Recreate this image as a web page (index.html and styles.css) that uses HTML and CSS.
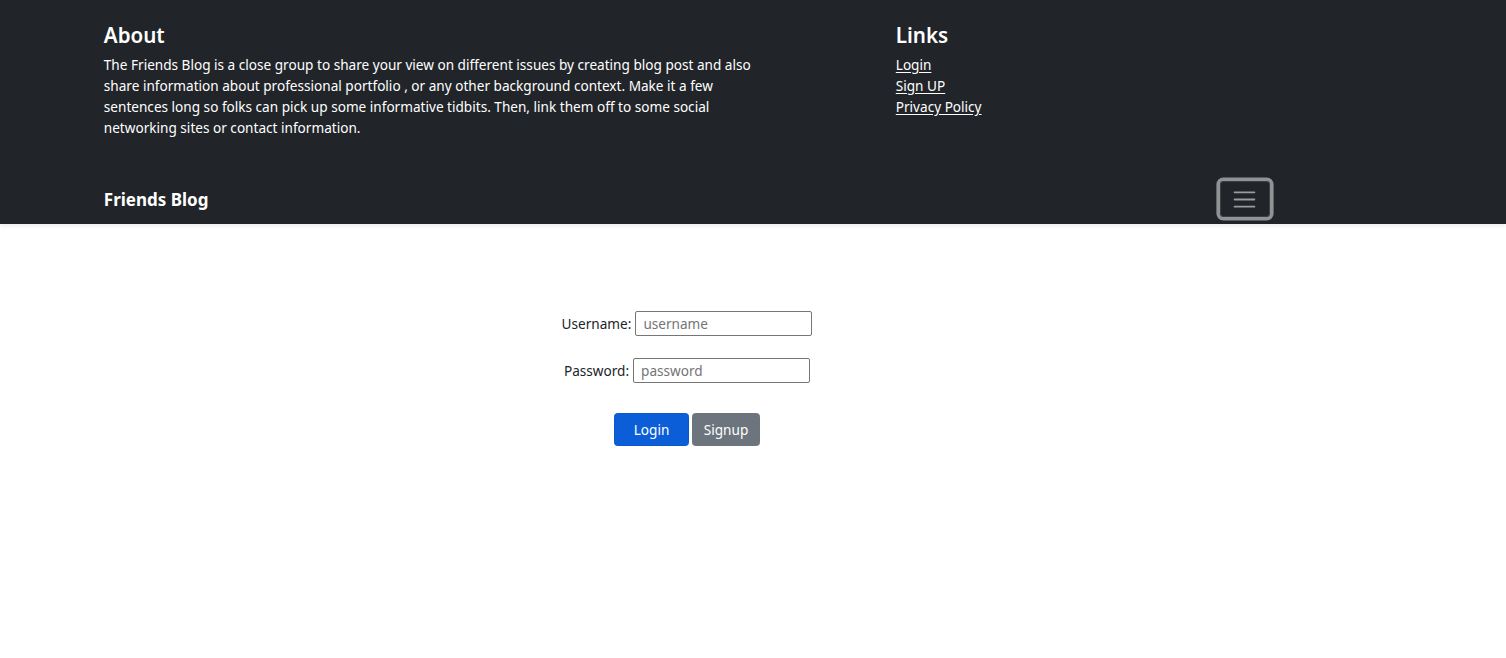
FILE: index.html
```html
<!DOCTYPE html>
<html lang="en">
<head>
<meta charset="utf-8">
<title>Friends Blog</title>
<link rel="stylesheet" href="styles.css">
</head>
<body>
<header class="site-header">
  <div class="header-info">
    <div class="container">
      <div class="info-row">
        <div class="about-col">
          <h4 class="col-title">About</h4>
          <p class="about-text">The Friends Blog is a close group to share your view on different issues by creating blog post and also share information about professional portfolio , or any other background context. Make it a few sentences long so folks can pick up some informative tidbits. Then, link them off to some social networking sites or contact information.</p>
        </div>
        <div class="links-col">
          <h4 class="col-title">Links</h4>
          <ul class="link-list">
            <li><a href="#" class="link">Login</a></li>
            <li><a href="#" class="link">Sign UP</a></li>
            <li><a href="#" class="link">Privacy Policy</a></li>
          </ul>
        </div>
      </div>
    </div>
  </div>
  <div class="navbar">
    <div class="container navbar-inner">
      <a href="#" class="brand">Friends Blog</a>
      <button class="toggler" type="button" aria-label="Toggle navigation">
        <svg class="toggler-icon" viewBox="0 0 30 30" width="27" height="27" aria-hidden="true">
          <path d="M4 7h22M4 15h22M4 23h22" stroke="rgba(255,255,255,0.55)" stroke-width="2" stroke-linecap="round" fill="none"/>
        </svg>
      </button>
    </div>
  </div>
</header>
<main class="container main">
  <form class="login-form">
    <div class="form-row">
      <label class="form-label" for="username">Username:</label>
      <input class="form-input" id="username" type="text" placeholder="username">
    </div>
    <div class="form-row">
      <label class="form-label" for="password">Password:</label>
      <input class="form-input form-input-pw" id="password" type="password" placeholder="password">
    </div>
    <div class="form-actions">
      <button type="submit" class="btn btn-primary">Login</button>
      <button type="button" class="btn btn-secondary">Signup</button>
    </div>
  </form>
</main>
</body>
</html>
```

FILE: styles.css
```css
* { box-sizing: border-box; }

html, body {
  margin: 0;
  padding: 0;
}

body {
  font-family: "Noto Sans", "Open Sans", Arial, sans-serif;
  font-size: 13.6px;
  line-height: 21px;
  color: #212529;
  background: #fff;
}

.container {
  width: 1188px;
  margin-left: 93px;
  padding: 0 10.8px;
}

.site-header {
  background: #212529;
  box-shadow: 0 2px 4px rgba(0, 0, 0, 0.075);
  position: relative;
}

.info-row {
  display: flex;
  margin: 0 -10.8px;
}

.about-col {
  flex: 0 0 58.3333%;
  padding: 21.6px 10.8px 21px;
}

.links-col {
  flex: 0 0 33.3333%;
  margin-left: 8.3333%;
  padding: 21.6px 10.8px 21px;
}

.col-title {
  margin: 0 0 6.2px;
  font-size: 20.6px;
  font-weight: 600;
  line-height: 26px;
  color: #fff;
}

.about-text {
  margin: 0 0 15.4px;
  color: #fff;
}

.link-list {
  list-style: none;
  margin: 0;
  padding: 0;
}

.link {
  color: #fff;
  text-decoration: underline;
  text-underline-offset: 2px;
}

.navbar {
  padding: 7px 0;
}

.navbar-inner {
  display: flex;
  align-items: center;
  justify-content: space-between;
}

.brand {
  color: #fff;
  font-weight: 700;
  font-size: 17px;
  line-height: 27px;
  text-decoration: none;
  padding: 4.5px 0;
}

.toggler {
  width: 50px;
  height: 36px;
  padding: 0;
  margin-right: 0.5px;
  display: flex;
  align-items: center;
  justify-content: center;
  background: transparent;
  border: 1px solid rgba(255, 255, 255, 0.12);
  border-radius: 3.4px;
  box-shadow: 0 0 0 3.6px rgba(255, 255, 255, 0.5);
}

.toggler-icon {
  display: block;
}

.main {
  padding-top: 87px;
}

.login-form {
  display: flex;
  flex-direction: column;
  align-items: center;
}

.form-row {
  display: flex;
  align-items: center;
  gap: 4px;
  margin-bottom: 22px;
}

.form-row + .form-row {
  margin-bottom: 30px;
}

.form-label {
  font-size: 13.6px;
  color: #212529;
}

.form-input {
  width: 177px;
  height: 25px;
  padding: 0 7px;
  border: 1px solid #767676;
  border-radius: 2px;
  font-family: "Noto Sans", "Open Sans", Arial, sans-serif;
  font-size: 13.6px;
  color: #212529;
  background: #fff;
}

.form-input::placeholder {
  color: #757575;
}

.form-actions {
  display: flex;
  gap: 3px;
}

.btn {
  height: 33px;
  border: 1px solid transparent;
  border-radius: 3.4px;
  font-family: "Noto Sans", "Open Sans", Arial, sans-serif;
  font-size: 13.6px;
  color: #fff;
  padding: 0;
  cursor: pointer;
}

.btn-primary {
  width: 75px;
  background: #0b5ed7;
  border-color: #0a58ca;
}

.btn-secondary {
  width: 68px;
  background: #6c757d;
  border-color: #6c757d;
}
```
